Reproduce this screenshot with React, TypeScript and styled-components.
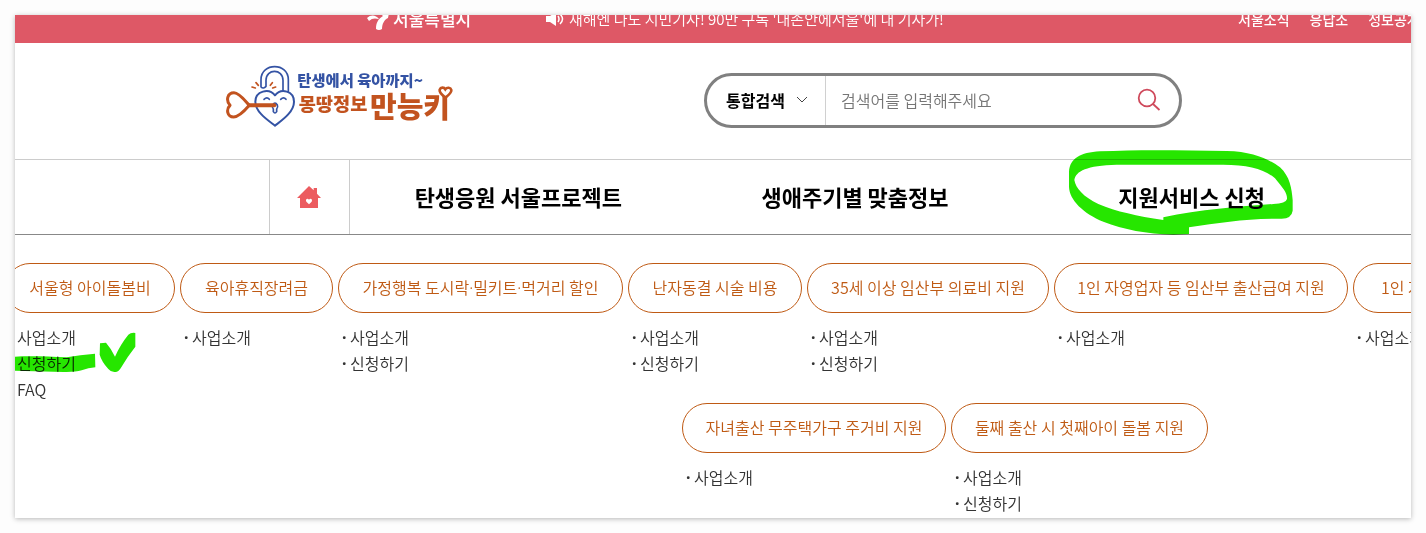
import React, { Fragment } from "react";
import styled, { createGlobalStyle } from "styled-components";

const GlobalStyle = createGlobalStyle`
  *, *::before, *::after { box-sizing: border-box; }
  body {
    margin: 0;
    background: #fdfdfd;
    font-family: "Noto Sans CJK KR", "Noto Sans", sans-serif;
    color: #000;
  }
  ul { list-style: none; margin: 0; padding: 0; }
  a { color: inherit; text-decoration: none; }
`;

const Page = styled.div`
  padding: 15px;
`;

const Card = styled.div`
  overflow: hidden;
  padding-bottom: 1px;
  background: #fff;
  box-shadow: 0 1px 5px rgba(0, 0, 0, 0.28);
`;

const TopBar = styled.div`
  display: flex;
  align-items: center;
  height: 48px;
  margin-top: -20px;
  padding-left: 352px;
  background: #de5866;
  color: #fff;
  white-space: nowrap;
`;

const CityLink = styled.a`
  display: flex;
  align-items: center;
  gap: 4px;
  width: 179px;
  font-size: 17px;
  font-weight: 500;
  line-height: 24px;
`;

const NewsLink = styled.a`
  display: flex;
  align-items: center;
  gap: 4px;
  flex: 1;
  font-size: 15px;
  font-weight: 350;
  line-height: 24px;
`;

const TopLinks = styled.nav`
  display: flex;
  gap: 20px;
  width: 173px;
  font-size: 14px;
  font-weight: 500;
  line-height: 24px;
`;

const Header = styled.header`
  display: flex;
  align-items: center;
  height: 116px;
  padding: 0 229px 2px 211px;
`;

const LogoLink = styled.a`
  display: flex;
  margin-right: auto;
`;

const Search = styled.form`
  display: flex;
  align-items: center;
  width: 478px;
  height: 55px;
  border: 3px solid #808080;
  border-radius: 28px;
  overflow: hidden;
`;

const SelectWrap = styled.label`
  display: flex;
  align-items: center;
  align-self: stretch;
  width: 119px;
  padding-left: 19px;
  border-right: 1px solid #d0d0d0;
`;

const Select = styled.select`
  appearance: none;
  width: 70px;
  padding: 0;
  border: 0;
  background: transparent;
  color: #000;
  font: 700 16px/24px "Noto Sans CJK KR", sans-serif;
  outline: 0;
`;

const SearchInput = styled.input`
  flex: 1;
  min-width: 0;
  padding: 0 15px;
  border: 0;
  outline: 0;
  background: transparent;
  font: 350 16px/24px "Noto Sans CJK KR", sans-serif;
  &::placeholder { color: #757575; opacity: 1; }
`;

const SearchButton = styled.button`
  display: flex;
  align-items: center;
  justify-content: center;
  width: 60px;
  height: 48px;
  padding: 0;
  border: 0;
  background: transparent;
`;

const MainNav = styled.nav`
  display: flex;
  height: 76px;
  padding: 0 51px 0 254px;
  border-top: 1px solid #ccc;
  border-bottom: 1px solid #888;
`;

const HomeLink = styled.a`
  display: flex;
  align-items: center;
  justify-content: center;
  width: 81px;
  padding-right: 2px;
  border: solid #ccc;
  border-width: 0 1px;
`;

const NavItem = styled.a`
  position: relative;
  display: flex;
  flex: 1;
  align-items: center;
  justify-content: center;
  padding-bottom: 2px;
  font-size: 22px;
  font-weight: 700;
  line-height: 32px;
  white-space: nowrap;
`;

const CircleMark = styled.svg`
  position: absolute;
  top: -20px;
  left: 50%;
  margin-left: -152px;
  mix-blend-mode: multiply;
  pointer-events: none;
`;

const MenuPanel = styled.div`
  padding-top: 28px;
`;

const MenuRow = styled.div<{ $start: number }>`
  display: flex;
  gap: 5px;
  margin-left: ${(p) => p.$start}px;
`;

const Column = styled.section<{ $width: number }>`
  position: relative;
  flex: none;
  width: ${(p) => p.$width}px;
`;

const Pill = styled.a`
  display: flex;
  align-items: center;
  justify-content: center;
  height: 50px;
  padding-bottom: 2px;
  border: 1px solid #bf5a14;
  border-radius: 25px;
  color: #bf5a14;
  font-size: 16px;
  font-weight: 350;
  white-space: nowrap;
`;

const Dot = styled.span`
  font-family: "Noto Sans", sans-serif;
`;

const SubList = styled.ul`
  padding: 11px 0 1px 4px;
`;

const SubItem = styled.li`
  display: flex;
  color: #333;
  font-size: 16px;
  font-weight: 350;
  line-height: 26px;
  &::before {
    content: "·";
    width: 8px;
    font-family: "Noto Sans", sans-serif;
    font-weight: 700;
  }
`;

const CheckMark = styled.svg`
  position: absolute;
  top: -13px;
  left: -5px;
  mix-blend-mode: multiply;
  pointer-events: none;
`;

type MenuColumn = { title: string; width: number; items: string[]; marked?: boolean };

const firstRow: MenuColumn[] = [
  { title: "서울형 아이돌봄비", width: 170, items: ["사업소개", "신청하기", "FAQ"], marked: true },
  { title: "육아휴직장려금", width: 153, items: ["사업소개"] },
  { title: "가정행복 도시락·밀키트·먹거리 할인", width: 285, items: ["사업소개", "신청하기"] },
  { title: "난자동결 시술 비용", width: 174, items: ["사업소개", "신청하기"] },
  { title: "35세 이상 임산부 의료비 지원", width: 242, items: ["사업소개", "신청하기"] },
  { title: "1인 자영업자 등 임산부 출산급여 지원", width: 294, items: ["사업소개"] },
  { title: "1인 자영업자", width: 142, items: ["사업소개"] },
];

const secondRow: MenuColumn[] = [
  { title: "자녀출산 무주택가구 주거비 지원", width: 264, items: ["사업소개"] },
  { title: "둘째 출산 시 첫째아이 돌봄 지원", width: 257, items: ["사업소개", "신청하기"] },
];

const MARK = "#26e600";

function Logo() {
  return (
    <svg
      width="228"
      height="70"
      viewBox="48 30 684 210"
      fontFamily='"Noto Sans CJK KR", sans-serif'
      fontWeight="900"
      role="img"
      aria-label="탄생에서 육아까지 몽땅정보 만능키"
    >
      <g fill="none" strokeLinecap="round" strokeLinejoin="round">
        <path
          d="M153 96V74C153 22 235 22 235 74V112M153 96Q160 103 168 94V76C168 40 219 40 219 76V108"
          stroke="#3453a4"
          strokeWidth="5"
        />
        <path
          d="M195 212C176 197 136 172 136 140C136 108 177 98 195 121C213 98 252 108 252 140C252 172 214 197 195 212Z"
          fill="#fff"
          stroke="#3453a4"
          strokeWidth="6"
        />
        <path d="M162 133Q171 124 178 133M212 133Q221 124 228 133" stroke="#3453a4" strokeWidth="5" />
        <path d="M188 150Q195 139 202 150Q205 157 200 162V170Q195 178 190 170V162Q185 157 188 150Z" stroke="#3453a4" strokeWidth="5" />
        <path
          d="M118 151C106 165 86 186 71 186C51 186 48 163 60 151C47 136 52 113 72 113C88 113 106 138 118 151Z"
          stroke="#c2531f"
          strokeWidth="9"
        />
        <path d="M118 151H193" stroke="#c2531f" strokeWidth="12" />
        <path d="M138 83L145 91M126 96L136 99M187 83L181 91M197 96L188 99" stroke="#c2531f" strokeWidth="5" />
      </g>
      <text x="262" y="93" fontSize="46" fill="#3453a4">탄생에서 육아까지~</text>
      <text x="266" y="167" fontSize="56" fill="#c2531f">몽땅정보</text>
      <text x="480" y="190" fontSize="87" fill="#c2531f">만능키</text>
      <path
        d="M706 128C697 120 687 113 689 104C692 96 702 96 706 103C711 96 722 97 724 105C725 114 714 121 706 128Z"
        fill="#fff"
        stroke="#c2531f"
        strokeWidth="8"
      />
    </svg>
  );
}

function PillText({ title }: { title: string }) {
  return (
    <span>
      {title.split("·").map((part, i) => (
        <Fragment key={part}>
          {i > 0 && <Dot>·</Dot>}
          {part}
        </Fragment>
      ))}
    </span>
  );
}

function Columns({ data, start }: { data: MenuColumn[]; start: number }) {
  return (
    <MenuRow $start={start}>
      {data.map((col) => (
        <Column key={col.title} $width={col.width}>
          <Pill href="#">
            <PillText title={col.title} />
          </Pill>
          <SubList>
            {col.items.map((item) => (
              <SubItem key={item}>
                <a href="#">{item}</a>
              </SubItem>
            ))}
          </SubList>
          {col.marked && (
            <CheckMark width="350" height="160" viewBox="0 0 1050 480" fill={MARK} aria-hidden="true">
              <path d="M45 320C90 317 150 320 200 322Q240 315 285 311L286 352Q265 354 245 361Q225 367 190 366L45 362Z" />
              <path d="M300 280L318 278Q334 296 345 320Q360 285 385 254Q393 247 406 249V290Q382 320 362 355Q355 367 345 366Q333 367 325 357Q305 335 299 314Z" />
            </CheckMark>
          )}
        </Column>
      ))}
    </MenuRow>
  );
}

export default function App() {
  return (
    <Page>
      <GlobalStyle />
      <Card>
        <TopBar>
          <CityLink href="#">
            <svg width="22" height="26" viewBox="0 0 22 26" fill="#fff" aria-hidden="true">
              <path d="M0 12C4 8 9 9 12 13C8 12 5 12 2 15Z" />
              <path d="M10 6Q16 1 22 7L21 12C17 14 15 18 15 23Q12 25 9 23C9 17 11 13 16 10Q13 7 10 6Z" />
            </svg>
            서울특별시
          </CityLink>
          <NewsLink href="#">
            <svg width="19" height="16" viewBox="0 0 19 16" aria-hidden="true">
              <path d="M0 5H4L10 1V15L4 11H0Z" fill="#fff" />
              <path d="M12 5Q14 8 12 11M14 3Q19 8 14 13" fill="none" stroke="#fff" strokeWidth="1.500" />
            </svg>
            새해엔 나도 시민기자! 90만 구독 '내손안에서울'에 내 기자가!
          </NewsLink>
          <TopLinks>
            <a href="#">서울소식</a>
            <a href="#">응답소</a>
            <a href="#">정보공개</a>
          </TopLinks>
        </TopBar>

        <Header>
          <LogoLink href="#">
            <Logo />
          </LogoLink>
          <Search>
            <SelectWrap>
              <Select aria-label="검색 범위">
                <option>통합검색</option>
              </Select>
              <svg width="12" height="8" viewBox="0 0 12 8" fill="none" stroke="#444" aria-hidden="true">
                <path d="M1 1L6 6L11 1" />
              </svg>
            </SelectWrap>
            <SearchInput type="text" placeholder="검색어를 입력해주세요" aria-label="검색어" />
            <SearchButton type="button" aria-label="검색">
              <svg width="24" height="24" viewBox="0 0 24 24" fill="none" stroke="#cf4a5c" strokeWidth="1.8" aria-hidden="true">
                <circle cx="10" cy="10" r="8.3" />
                <path d="M16 16L22.500 22" />
              </svg>
            </SearchButton>
          </Search>
        </Header>

        <MainNav>
          <HomeLink href="#" aria-label="홈">
            <svg width="24" height="22" viewBox="141 111 72 66" aria-hidden="true">
              <path d="M177 111L191 124V117H201V134L213 147H204V177H150V147H141Z" fill="#ec5b5f" />
              <path d="M177 166L169 158C165 151 173 146 177 152C181 146 189 151 185 158Z" fill="#fff" />
            </svg>
          </HomeLink>
          <NavItem href="#">탄생응원 서울프로젝트</NavItem>
          <NavItem href="#">생애주기별 맞춤정보</NavItem>
          <NavItem href="#">
            지원서비스 신청
            <CircleMark width="270" height="110" viewBox="0 0 810 330" fill={MARK} aria-hidden="true">
              <path
                fillRule="evenodd"
                d="M87 95C90 55 120 38 180 34C300 28 440 31 560 33C640 34 690 60 720 82C750 110 755 145 758 180V212Q755 235 725 236C620 235 540 248 447 262V282L400 284C320 282 250 268 190 245C130 220 88 180 87 140Z
                M103 120C108 92 140 77 230 74H540C620 73 670 85 705 115C730 145 742 160 741 177Q738 190 700 192C600 200 480 208 370 232V240C290 228 230 215 175 192C130 170 107 145 103 120Z"
              />
            </CircleMark>
          </NavItem>
        </MainNav>

        <MenuPanel>
          <Columns data={firstRow} start={-10} />
          <Columns data={secondRow} start={667} />
        </MenuPanel>
      </Card>
    </Page>
  );
}
